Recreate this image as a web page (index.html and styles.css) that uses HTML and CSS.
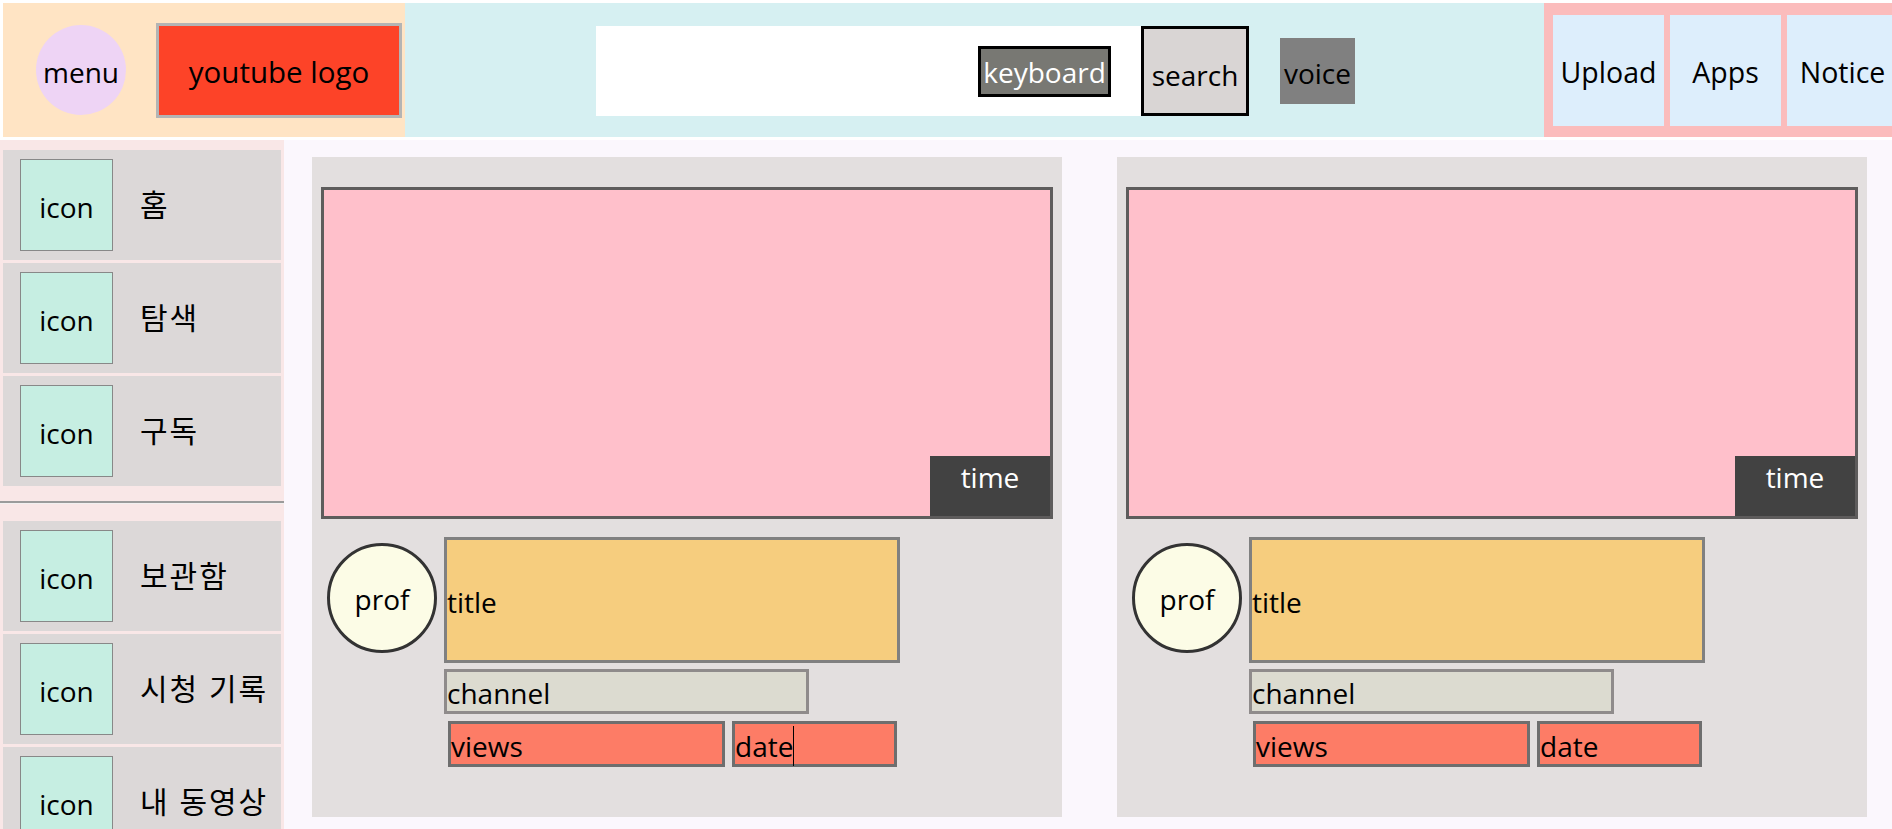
FILE: index.html
```html
<!DOCTYPE html>
<html lang="ko">
<head>
<meta charset="utf-8">
<title>YouTube layout</title>
<link rel="stylesheet" href="styles.css">
</head>
<body>
<header class="top">
  <div class="top-left">
    <div class="menu">menu</div>
    <div class="logo">youtube logo</div>
  </div>
  <div class="top-center">
    <div class="search-box"><div class="keyboard">keyboard</div></div>
    <div class="search-btn">search</div>
    <div class="voice">voice</div>
  </div>
  <div class="top-right">
    <div class="tbtn">Upload</div>
    <div class="tbtn">Apps</div>
    <div class="tbtn">Notice</div>
  </div>
</header>
<div class="page">
  <nav class="side">
    <div class="group first">
      <div class="item"><div class="icon">icon</div><span class="label">홈</span></div>
      <div class="item"><div class="icon">icon</div><span class="label">탐색</span></div>
      <div class="item"><div class="icon">icon</div><span class="label">구독</span></div>
    </div>
    <hr class="divider">
    <div class="group">
      <div class="item"><div class="icon">icon</div><span class="label">보관함</span></div>
      <div class="item"><div class="icon">icon</div><span class="label">시청 기록</span></div>
      <div class="item"><div class="icon">icon</div><span class="label">내 동영상</span></div>
    </div>
  </nav>
  <main class="main">
    <article class="card">
      <div class="thumb"><div class="time">time</div></div>
      <div class="info">
        <div class="prof">prof</div>
        <div class="meta">
          <div class="title">title</div>
          <div class="channel">channel</div>
          <div class="stats">
            <div class="views">views</div>
            <div class="date"><span class="caret">date</span></div>
          </div>
        </div>
      </div>
    </article>
    <article class="card">
      <div class="thumb"><div class="time">time</div></div>
      <div class="info">
        <div class="prof">prof</div>
        <div class="meta">
          <div class="title">title</div>
          <div class="channel">channel</div>
          <div class="stats">
            <div class="views">views</div>
            <div class="date">date</div>
          </div>
        </div>
      </div>
    </article>
  </main>
</div>
</body>
</html>
```
FILE: styles.css
```css
html { overflow: hidden; }
body {
  margin: 0;
  background: #fff;
  font-family: "Open Sans", "Noto Sans CJK KR", sans-serif;
  font-size: 28px;
  line-height: 40px;
  color: #000;
}

/* header */
.top {
  display: flex;
  height: 134px;
  margin: 3px 0 3px 3px;
}
.top-left {
  flex: 0 0 402px;
  box-sizing: border-box;
  background: #ffe4c4;
  display: flex;
  align-items: center;
  padding-left: 33px;
}
.menu {
  width: 90px;
  height: 90px;
  box-sizing: border-box;
  padding-top: 3px;
  border-radius: 50%;
  background: #eed4f5;
  display: flex;
  align-items: center;
  justify-content: center;
}
.logo {
  margin-left: 30px;
  width: 246px;
  height: 95px;
  box-sizing: border-box;
  padding-top: 3px;
  border: 3px solid #b4b4b4;
  background: #fd4328;
  font-size: 29.5px;
  display: flex;
  align-items: center;
  justify-content: center;
}
.top-center {
  flex: 0 0 1139px;
  box-sizing: border-box;
  background: #d6f0f2;
  display: flex;
  align-items: flex-start;
  padding: 23px 0 0 191px;
}
.search-box {
  width: 545px;
  height: 90px;
  box-sizing: border-box;
  background: #fff;
  display: flex;
  align-items: center;
  justify-content: flex-end;
  padding-right: 30px;
}
.keyboard {
  width: 133px;
  height: 51px;
  box-sizing: border-box;
  border: 3px solid #000;
  background: #787873;
  color: #fff;
  text-align: center;
  padding-top: 3px;
  white-space: nowrap;
}
.search-btn {
  width: 108px;
  height: 90px;
  box-sizing: border-box;
  padding-top: 7px;
  border: 3px solid #000;
  background: #d9d5d4;
  display: flex;
  align-items: center;
  justify-content: center;
}
.voice {
  margin: 12px 0 0 31px;
  width: 75px;
  height: 66px;
  box-sizing: border-box;
  padding-top: 15px;
  background: #808080;
  text-align: center;
}
.top-right {
  flex: 0 0 auto;
  display: flex;
  gap: 6px;
  padding: 12px 9px 11px 9px;
  background: #fbbcbc;
}
.tbtn {
  width: 111px;
  height: 111px;
  box-sizing: border-box;
  padding-top: 3px;
  background: #ddeefc;
  font-size: 28.5px;
  display: flex;
  align-items: center;
  justify-content: center;
}

/* page */
.page {
  display: flex;
  height: 689px;
}
.side {
  flex: 0 0 284px;
  background: #f9e7e7;
  overflow: hidden;
}
.group { padding: 0 3px; }
.group.first { padding-top: 10px; }
.item {
  height: 110px;
  margin-bottom: 3px;
  background: #dcd8d8;
  display: flex;
  align-items: center;
  padding-left: 17px;
}
.icon {
  width: 91px;
  height: 90px;
  box-sizing: content-box;
  padding-top: 0;
  border: 1px solid #888;
  background: #c6eee2;
  display: flex;
  align-items: center;
  justify-content: center;
}
.icon::before { content: ""; display: block; height: 3px; }
.icon { flex-direction: column; }
.label {
  margin-left: 27px;
  font-size: 30px;
  letter-spacing: 2px;
  white-space: nowrap;
}
.divider {
  margin: 15px 0 17px;
  height: 0;
  border: 0;
  border-top: 2px solid #9b9b9b;
  border-bottom: 1px solid #f2f0f0;
}

.main {
  flex: 1;
  background: #fbf7fd;
  padding: 17px 0 0 28px;
  display: flex;
  align-items: flex-start;
  gap: 55px;
}
.card {
  flex: 0 0 750px;
  height: 660px;
  box-sizing: border-box;
  padding: 30px 9px 0;
  background: #e3dfdf;
}
.thumb {
  position: relative;
  height: 332px;
  box-sizing: border-box;
  border: 3px solid #5e5c5c;
  background: #ffc0cb;
}
.time {
  position: absolute;
  right: 0;
  bottom: 0;
  width: 120px;
  height: 60px;
  box-sizing: border-box;
  padding-top: 1px;
  background: #424242;
  color: #fff;
  text-align: center;
}
.info {
  display: flex;
  margin-top: 18px;
  padding-left: 6px;
}
.prof {
  width: 110px;
  height: 110px;
  margin-top: 6px;
  box-sizing: border-box;
  padding-top: 1px;
  border: 3px solid #333;
  border-radius: 50%;
  background: #fcfce6;
  display: flex;
  align-items: center;
  justify-content: center;
}
.meta { margin-left: 7px; }
.title, .channel, .views, .date {
  box-sizing: border-box;
  padding-top: 3px;
  display: flex;
  align-items: center;
}
.title {
  width: 456px;
  height: 126px;
  border: 3px solid #808080;
  background: #f6cd7e;
}
.channel {
  margin-top: 6px;
  width: 365px;
  height: 45px;
  border: 3px solid #8f8b8b;
  background: #dcdbd0;
}
.stats {
  display: flex;
  gap: 7px;
  margin-top: 7px;
  padding-left: 4px;
}
.views, .date {
  height: 46px;
  border: 3px solid #6e6e6e;
  background: #fd7c66;
}
.views { width: 277px; }
.date { width: 165px; }
.caret { border-right: 1px solid #000; }
```
